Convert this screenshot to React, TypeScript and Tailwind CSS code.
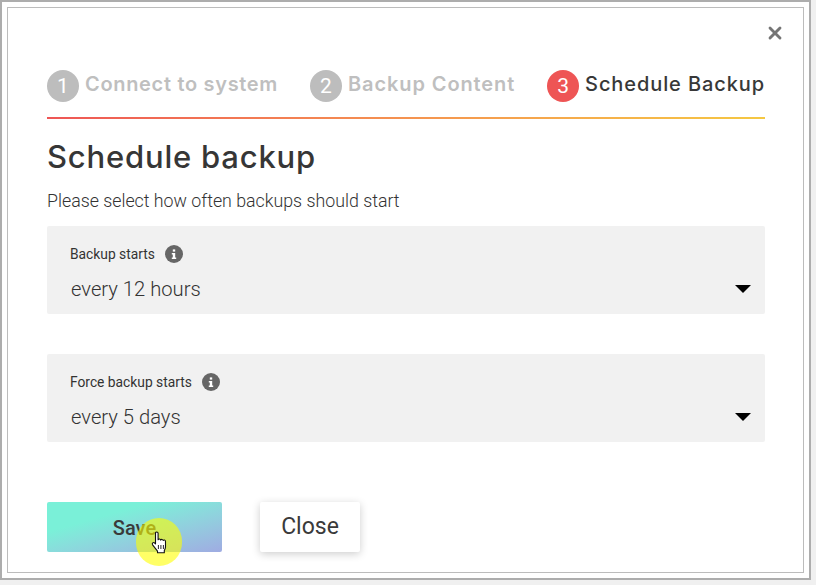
import React from 'react';
import { X } from 'lucide-react';

const heading = "font-['Inter','Liberation_Sans',sans-serif]";

const Step = ({ n, label, active, spacing }: { n: number; label: string; active?: boolean; spacing: string }) => (
  <div className="flex items-center gap-[6px]">
    <span
      className={`w-8 h-8 rounded-full flex items-center justify-center text-[21px] text-white pt-[2px] ${
        active ? 'bg-[#ee5555]' : 'bg-[#bdbdbd]'
      }`}
    >
      {n}
    </span>
    <span
      className={`${heading} ${spacing} text-[20px] relative top-[-2px] ${
        active ? 'font-medium text-[#383838]' : 'font-semibold text-[#bfbfbf]'
      }`}
    >
      {label}
    </span>
  </div>
);

const Field = ({ label, value }: { label: string; value: string }) => (
  <div className="h-[88px] bg-[#f1f1f1] rounded-[2px] pl-[23px] pr-[14px] pt-[18px]">
    <div className="flex items-center gap-[10px] h-[20px] text-[13.8px] text-[#333]">
      {label}
      <span className="w-[18px] h-[18px] rounded-full bg-[#666] flex items-center justify-center text-white">
        <svg viewBox="0 0 12 12" className="w-[12px] h-[12px]" fill="currentColor">
          <rect x="4.8" y="1.4" width="2.4" height="2.2" />
          <path d="M3.8 5h3.4v4.4h1V11H3.8V9.4h1V6.6h-1z" />
        </svg>
      </span>
    </div>
    <div className="flex items-center justify-between mt-[10px] pl-[1px] h-[30px]">
      <span className="text-[20.2px] text-[#333] font-light">{value}</span>
      <span className="w-0 h-0 border-x-[8px] border-x-transparent border-t-[8px] border-t-black" />
    </div>
  </div>
);

const Hand = () => (
  <svg viewBox="0 0 18 24" className="w-[18px] h-[24px]">
    <path
      d="M4.5 2.2c0-1.6 2.6-1.6 2.6 0v6.6c.4-1.1 2.4-1.1 2.6.3.4-1 2.3-.9 2.5.4.5-.8 2.3-.6 2.3.9v5.4c0 1.6-.6 2.6-1.2 3.8v2.2H6.5v-1.7L1.6 13.8c-1-1.4.7-3 2.1-1.8l.8.8z"
      fill="#fff"
      stroke="#111"
      strokeWidth="1.1"
      strokeLinejoin="round"
    />
    <path d="M7.4 14v4M9.9 14v4M12.4 14v4" stroke="#111" strokeWidth="0.9" />
  </svg>
);

export default function App() {
  return (
    <div className="w-[816px] h-[585px] bg-[#f0f0f0] overflow-hidden font-['Roboto',sans-serif]">
      <div className="w-[811px] h-[580px] border-2 border-[#adadad] bg-white p-[5px]">
        <div className="relative h-full border border-[#bcbcbc] pl-[39px] pr-[38px] pt-[47px]">
          <X className="absolute top-[15px] right-[18px] w-[20px] h-[20px] text-[#757575]" strokeWidth={3.4} />

          {/* Steps */}
          <div className="flex justify-between h-[32px] mt-[15px]">
            <Step n={1} label="Connect to system" spacing="tracking-[0.68px]" />
            <Step n={2} label="Backup Content" spacing="tracking-[0.9px]" />
            <Step n={3} label="Schedule Backup" spacing="tracking-[0.9px]" active />
          </div>
          <div className="h-[2px] mt-[15px] bg-gradient-to-r from-[#ee5555] to-[#f5c842]" />

          <h1 className={`${heading} text-[31px] tracking-[0.8px] leading-[40px] font-medium text-[#363636] mt-[18px]`}>
            Schedule backup
          </h1>
          <p className="text-[17.8px] font-light leading-[24px] text-[#333] mt-[12px]">
            Please select how often backups should start
          </p>

          <div className="flex flex-col gap-[40px] mt-[13px]">
            <Field label="Backup starts" value="every 12 hours" />
            <Field label="Force backup starts" value="every 5 days" />
          </div>

          <div className="flex gap-[38px] mt-[60px]">
            <button className="w-[175px] h-[50px] rounded-[2px] bg-gradient-to-br from-[#7af0d8] from-30% to-[#9fabe2] text-[20px] font-medium text-[#3a3a3a] pt-[2px]">
              Save
            </button>
            <button className="w-[100px] h-[50px] rounded-[2px] bg-white shadow-[0_2px_8px_rgba(0,0,0,0.2)] text-[23px] text-[#3a3a3a] pt-[1px]">
              Close
            </button>
          </div>

          <div className="absolute left-[128px] top-[510px] w-[46px] h-[48px] rounded-full bg-[#ffff00]/60" />
          <div className="absolute left-[143px] top-[523px]">
            <Hand />
          </div>
        </div>
      </div>
    </div>
  );
}
